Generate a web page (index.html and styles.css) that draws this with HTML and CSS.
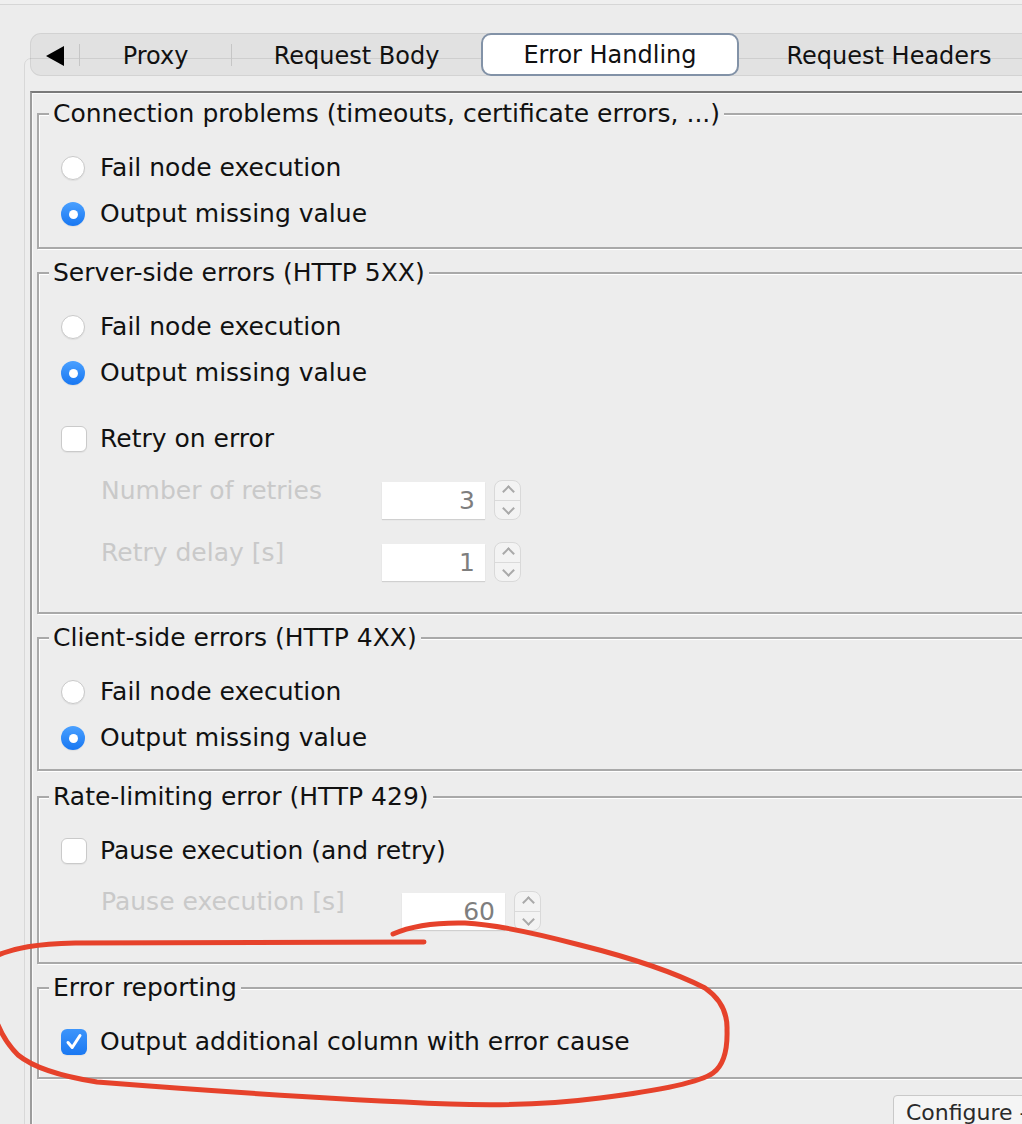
FILE: index.html
```html
<!DOCTYPE html>
<html lang="en">
<head>
    <meta charset="UTF-8">
    <meta name="viewport" content="width=device-width, initial-scale=1.0">
    <title>Error Handling</title>
    <link rel="stylesheet" href="styles.css">
</head>
<body>

<div class="topbar"></div>

<div class="tabs">
    <div class="tab tab-arrow"><span class="arrow"></span></div>
    <span class="sep"></span>
    <div class="tab tab-proxy">Proxy</div>
    <span class="sep"></span>
    <div class="tab tab-body">Request Body</div>
    <div class="tab tab-errors active">Error Handling</div>
    <div class="tab tab-headers">Request Headers</div>
</div>

<div class="panel">
    <div class="content">

        <fieldset class="group group-connection">
            <legend>Connection problems (timeouts, certificate errors, ...)</legend>
            <label class="row"><span class="radio"></span>Fail node execution</label>
            <label class="row"><span class="radio checked"></span>Output missing value</label>
        </fieldset>

        <fieldset class="group group-server">
            <legend>Server-side errors (HTTP 5XX)</legend>
            <label class="row"><span class="radio"></span>Fail node execution</label>
            <label class="row"><span class="radio checked"></span>Output missing value</label>
            <label class="row row-check"><span class="checkbox"></span>Retry on error</label>
            <div class="spin-row">
                <span class="spin-label">Number of retries</span>
                <span class="field">3</span>
                <span class="stepper"><span class="up"></span><span class="down"></span></span>
            </div>
            <div class="spin-row spin-row-second">
                <span class="spin-label">Retry delay [s]</span>
                <span class="field">1</span>
                <span class="stepper"><span class="up"></span><span class="down"></span></span>
            </div>
        </fieldset>

        <fieldset class="group group-client">
            <legend>Client-side errors (HTTP 4XX)</legend>
            <label class="row"><span class="radio"></span>Fail node execution</label>
            <label class="row"><span class="radio checked"></span>Output missing value</label>
        </fieldset>

        <fieldset class="group group-rate">
            <legend>Rate-limiting error (HTTP 429)</legend>
            <label class="row"><span class="checkbox"></span>Pause execution (and retry)</label>
            <div class="spin-row spin-row-pause">
                <span class="spin-label">Pause execution [s]</span>
                <span class="field">60</span>
                <span class="stepper"><span class="up"></span><span class="down"></span></span>
            </div>
        </fieldset>

        <fieldset class="group group-report">
            <legend>Error reporting</legend>
            <label class="row">
                <span class="checkbox checked">
                    <svg viewBox="0 0 26 26" width="26" height="26"><path d="M7 13.5 L11.2 18.5 L19 6.5" fill="none" stroke="#fff" stroke-width="3" stroke-linecap="round" stroke-linejoin="round"/></svg>
                </span>Output additional column with error cause
            </label>
        </fieldset>

        <div class="footer">
            <button class="configure">Configure -</button>
        </div>
    </div>
</div>

<!-- hand drawn marker around the error reporting box -->
<svg class="annotation" viewBox="0 0 1022 1124" width="1022" height="1124">
    <path d="M-2 955 C 15 948, 35 944, 75 943 L 424 942" />
    <path d="M393 934 Q 420 922 465 923 Q 505 925 580 945 Q 660 965 705 988 Q 728 1004 727 1030 Q 728 1062 713 1073 Q 695 1086 600 1098 Q 530 1107 450 1104 Q 300 1098 97 1082 Q 40 1073 18 1055 Q 5 1042 -2 1025" />
</svg>

</body>
</html>
```

FILE: styles.css
```css
html, body {
    margin: 0;
    height: 1124px;
}
body {
    position: relative;
    overflow: hidden;
    background-color: #ececec;
    font-family: "DejaVu Sans", "Noto Sans", sans-serif;
    color: #111;
}
.topbar {
    height: 4px;
    background-color: #efefef;
    border-bottom: 1px solid #d6d6d6;
}

/* tab strip */
.tabs {
    position: relative;
    z-index: 1;
    display: flex;
    align-items: center;
    height: 41px;
    width: 1100px;
    margin: 28px 0 0 30px;
    border: 1px solid rgba(0, 0, 0, 0.07);
    border-radius: 11px;
    background-color: rgba(0, 0, 0, 0.045);
    font-size: 24px;
}
.tab {
    display: flex;
    align-items: center;
    justify-content: center;
    height: 100%;
    box-sizing: border-box;
    padding-top: 2px;
}
.tab-arrow { width: 48px; }
.tab-proxy { width: 151px; }
.tab-body { width: 249px; }
.tab-errors { width: 258px; }
.tab-headers { width: 300px; }
.arrow {
    width: 0;
    height: 0;
    border-top: 10px solid transparent;
    border-bottom: 10px solid transparent;
    border-right: 18px solid #000;
}
.sep {
    width: 1px;
    height: 22px;
    background-color: #c6c6c6;
}
.tab.active {
    align-self: stretch;
    height: auto;
    margin: -1px 0;
    background-color: #fff;
    border: 2px solid #8292a7;
    border-radius: 10px;
    padding-top: 1px;
}

/* main panel */
.panel {
    width: 1200px;
    margin: -18px 0 0 24px;
    padding: 32px 0 0 5px;
    border: 1px solid #d8d8d8;
    border-radius: 7px;
    background-color: #ededed;
    height: 1100px;
}
.content {
    border-top: 2px solid #7a7a7a;
    border-left: 2px solid #9c9c9c;
    box-shadow: inset 1px 1px 0 #fafafa;
    padding: 8px 0 0 5px;
    height: 100%;
    font-size: 25px;
}

.group {
    margin: 0 0 11px 0;
    padding: 18px 0 10px 10px;
    border: 2px solid #a9a9a9;
    box-shadow: inset 1px 1px 0 #fff, 1px 1px 0 #fff;
    min-width: 0;
}
.group legend {
    padding: 0 4px;
    line-height: 26px;
    background-color: #ededed;
    color: #111;
}
.row {
    display: flex;
    align-items: center;
    gap: 15px;
    height: 46px;
    padding-left: 12px;
    line-height: 26px;
}
.row-check {
    margin-top: 20px;
}

.radio {
    width: 24px;
    height: 24px;
    box-sizing: border-box;
    border-radius: 50%;
    border: 1px solid #c9c9c9;
    background-color: #fff;
    box-shadow: 0 1px 1px rgba(0, 0, 0, 0.06);
    flex-shrink: 0;
}
.radio.checked {
    border: none;
    background: linear-gradient(#4aa0ff, #1877f2);
    display: flex;
    align-items: center;
    justify-content: center;
}
.radio.checked::after {
    content: "";
    width: 9px;
    height: 9px;
    border-radius: 50%;
    background-color: #fff;
}
.checkbox {
    width: 26px;
    height: 26px;
    margin-right: -2px;
    box-sizing: border-box;
    border-radius: 6px;
    border: 1px solid #cacaca;
    background-color: #fff;
    box-shadow: 0 1px 1px rgba(0, 0, 0, 0.05);
    flex-shrink: 0;
}
.checkbox.checked {
    border: none;
    background: linear-gradient(#3d95fb, #1a78f2);
}
.checkbox svg {
    display: block;
}

/* spinner rows */
.spin-row {
    display: flex;
    align-items: flex-start;
    height: 40px;
    margin-top: 18px;
    padding-left: 52px;
}
.spin-row-second {
    margin-top: 22px;
}
.spin-row-pause {
    margin-top: 17px;
}
.spin-label {
    width: 281px;
    margin-top: -2px;
    line-height: 26px;
    color: #c9c9c9;
}
.spin-row-pause .spin-label {
    width: 301px;
}
.field {
    width: 103px;
    height: 37px;
    margin-top: 2px;
    box-sizing: border-box;
    padding-right: 10px;
    text-align: right;
    line-height: 38px;
    background-color: #fff;
    color: #7e7e7e;
    box-shadow: 0 1px 1px rgba(0, 0, 0, 0.12);
}
.stepper {
    display: flex;
    flex-direction: column;
    width: 27px;
    height: 40px;
    margin-left: 9px;
    box-sizing: border-box;
    border: 1px solid #d9d9d9;
    border-radius: 8px;
    background-color: #f3f3f3;
    overflow: hidden;
}
.stepper .up, .stepper .down {
    flex: 1;
    position: relative;
}
.stepper .up {
    border-bottom: 1px solid #dadada;
}
.stepper .up::after, .stepper .down::after {
    content: "";
    position: absolute;
    left: 9px;
    width: 7px;
    height: 7px;
    border-left: 2px solid #a9a9a9;
    border-top: 2px solid #a9a9a9;
}
.stepper .up::after {
    top: 6px;
    transform: rotate(45deg);
}
.stepper .down::after {
    top: 3px;
    transform: rotate(-135deg);
}

.group-server {
    padding-bottom: 30px;
}
.group-client {
    padding-bottom: 8px;
    margin-bottom: 13px;
}
.group-rate {
    padding-bottom: 31px;
}
.group-report {
    padding-bottom: 12px;
}

.footer {
    padding: 5px 0 0 856px;
}
.configure {
    height: 40px;
    padding: 0 12px 6px;
    border: 1px solid #c9c9c9;
    border-radius: 4px;
    background-color: #f5f5f5;
    font-family: "DejaVu Sans", sans-serif;
    font-size: 22px;
    color: #2a2a2a;
    white-space: nowrap;
}

.annotation {
    position: absolute;
    top: 0;
    left: 0;
    z-index: 2;
    pointer-events: none;
}
.annotation path {
    fill: none;
    stroke: #e6422b;
    stroke-width: 5;
    stroke-linecap: round;
    stroke-linejoin: round;
}
```
